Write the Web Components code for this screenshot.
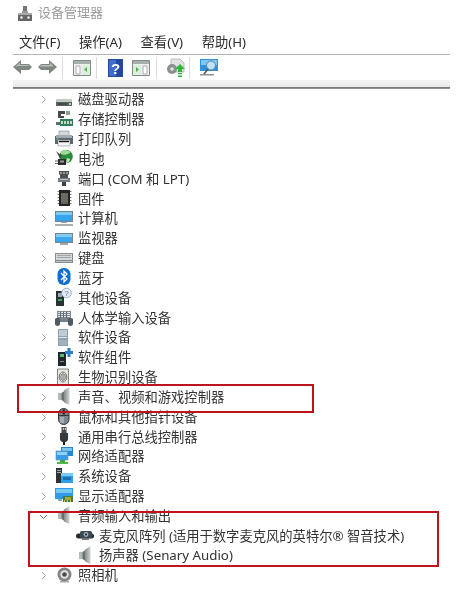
<!DOCTYPE html>
<html lang="zh">
<head>
<meta charset="utf-8">
<title>设备管理器</title>
<style>
html,body{margin:0;padding:0;background:#fff;width:475px;height:595px;overflow:hidden}
body{font-family:"Noto Sans","Noto Sans CJK SC",sans-serif;color:#333}
</style>
</head>
<body>
<dm-app>
  <dm-title slot="title" icon="manager">设备管理器</dm-title>
  <dm-menu slot="menu"><span>文件(F)</span><span>操作(A)</span><span>查看(V)</span><span>帮助(H)</span></dm-menu>
  <dm-toolbar slot="toolbar"></dm-toolbar>
  <dm-tree slot="tree">
    <dm-row icon="disk">磁盘驱动器</dm-row>
    <dm-row icon="storage">存储控制器</dm-row>
    <dm-row icon="printer">打印队列</dm-row>
    <dm-row icon="battery">电池</dm-row>
    <dm-row icon="port">端口 (COM 和 LPT)</dm-row>
    <dm-row icon="firmware">固件</dm-row>
    <dm-row icon="computer">计算机</dm-row>
    <dm-row icon="monitor">监视器</dm-row>
    <dm-row icon="keyboard">键盘</dm-row>
    <dm-row icon="bluetooth">蓝牙</dm-row>
    <dm-row icon="other">其他设备</dm-row>
    <dm-row icon="hid">人体学输入设备</dm-row>
    <dm-row icon="software">软件设备</dm-row>
    <dm-row icon="component">软件组件</dm-row>
    <dm-row icon="biometric">生物识别设备</dm-row>
    <dm-row icon="speaker">声音、视频和游戏控制器</dm-row>
    <dm-row icon="mouse">鼠标和其他指针设备</dm-row>
    <dm-row icon="usb">通用串行总线控制器</dm-row>
    <dm-row icon="network">网络适配器</dm-row>
    <dm-row icon="system">系统设备</dm-row>
    <dm-row icon="display">显示适配器</dm-row>
    <dm-row icon="speaker" open>音频输入和输出</dm-row>
    <dm-row icon="mic" child>麦克风阵列 (适用于数字麦克风的英特尔® 智音技术)</dm-row>
    <dm-row icon="speaker" child>扬声器 (Senary Audio)</dm-row>
    <dm-row icon="camera">照相机</dm-row>
  </dm-tree>
  <dm-mark slot="marks" style="left:17px;top:384px;width:297px;height:29px"></dm-mark>
  <dm-mark slot="marks" style="left:28px;top:511px;width:411px;height:56px"></dm-mark>
</dm-app>
<script>
const ICONS = {
  manager:`<path d="M6 1h4v5H6z" fill="#777"/><path d="M5 6h6v2H5z" fill="#999"/><path d="M1 8h14v8H1z" fill="#666"/><path d="M1 8h14v2H1z" fill="#aaa"/><circle cx="4.500" cy="12.500" r="1.300" fill="#eee"/><circle cx="11.500" cy="12.500" r="1.300" fill="#eee"/>`,
  disk:`<path d="M2 9h14l1 3v4H1v-4z" fill="#59625b"/><path d="M2 9h14l1 3H1z" fill="#c4cac4"/><path d="M3 13.500h9v1H3z" fill="#2f3832"/><path d="M14 13h2v2h-2z" fill="#a8dca8"/>`,
  storage:`<path d="M3 1h7v3H6v2h3v2H3z" fill="#4a4a4a"/><path d="M11 1h4v4h-4z" fill="#8fa08f"/><path d="M5 9h13v7H5z" fill="#2f7d5a"/><path d="M6 11h2v3H6zM9 11h2v3H9zM12 11h2v3h-2zM15 11h2v3h-2z" fill="#c8d8c0"/><path d="M1 12h4v3H1z" fill="#666"/>`,
  printer:`<path d="M4 1h10v5H4z" fill="#d3d9dc" stroke="#80898e" stroke-width=".6"/><path d="M0 6h18v8H0z" fill="#5b676f"/><path d="M1 5h16v3H1z" fill="#a2abb0"/><path d="M3 10h12v6H3z" fill="#f4f4f4" stroke="#70797e" stroke-width=".5"/><path d="M4 10.800h10v1.400H4z" fill="#111"/><path d="M1.500 8.500h2v1h-2z" fill="#7fd07f"/>`,
  battery:`<circle cx="11" cy="7.500" r="6.800" fill="#2c8c3c"/><path d="M6 3c3-3 7-2.500 9.500 0-2 2.500-6 3.500-9.500 2z" fill="#9ddc96"/><path d="M12 9l3 1-1 3-3 1z" fill="#bfe8b8"/><path d="M1 2l6 5-2 2.500z" fill="#444"/><path d="M3 10h8v6H3z" fill="#2c2c2c"/><path d="M0 11.500h3v1H0zM0 14h3v1H0z" fill="#666"/><path d="M5 11.500h4v2H5z" fill="#9a9a9a"/>`,
  port:`<path d="M4 2h10v3l-1 1v3H5V6L4 5z" fill="#4e5356"/><path d="M5.500 3h1v2h-1zM8.500 3h1v2h-1zM11.500 3h1v2h-1z" fill="#dcdcdc"/><path d="M3 9h12v4H3z" fill="#757b80"/><path d="M7 13h4v4H7z" fill="#3a3f42"/><path d="M5 10h8v1H5z" fill="#c0c4c8"/>`,
  firmware:`<path d="M4 1h11v16H4z" fill="#242424"/><path d="M6 4h7v11H6z" fill="#63635a"/><path d="M6 6h7M6 9h7M6 12h7" stroke="#8a8a80" stroke-width=".6"/><path d="M2.500 2h1.500v1H2.500zM2.500 5h1.500v1H2.500zM2.500 8h1.500v1H2.500zM2.500 11h1.500v1H2.500zM2.500 14h1.500v1H2.500zM15 2h1.500v1H15zM15 5h1.500v1H15zM15 8h1.500v1H15zM15 11h1.500v1H15zM15 14h1.500v1H15z" fill="#777"/>`,
  computer:`<path d="M0 2h18v11H0z" fill="#74848f"/><path d="M1 3h16v9H1z" fill="#35a4ee"/><path d="M1 3h16v3H1z" fill="#7ccbf7"/><path d="M6 13h6v1H6z" fill="#9aa3a9"/><path d="M0 15h18v2H0z" fill="#a9b0b5"/>`,
  monitor:`<path d="M0 4h18v10H0z" fill="#74848f"/><path d="M1 5h16v8H1z" fill="#3ea8ee"/><path d="M1 5h16v3H1z" fill="#82ccf6"/><path d="M5 14h8v2H5z" fill="#a3abb0"/>`,
  keyboard:`<path d="M0 4h18v10H0z" fill="#858c91"/><path d="M1 5h16v6H1z" fill="#d5d9dc"/><path d="M2 6h14v1H2zM2 8h14v1H2z" fill="#9da4a9"/><path d="M1 12h16v1H1z" fill="#bfc4c7"/>`,
  bluetooth:`<rect x="2.500" y="0" width="13" height="17" rx="6" fill="#0e6fd0"/><path d="M6 5l6 6-3 3V3l3 3-6 6" fill="none" stroke="#fff" stroke-width="1.300"/>`,
  other:`<path d="M1 3h8v15H1z" fill="#28322f"/><path d="M3 5h4v4H3z" fill="#9ab"/><path d="M3 11h4v2H3z" fill="#3aa86a"/><circle cx="11.500" cy="5" r="4.800" fill="#e4ecf5" stroke="#8fa2b8" stroke-width=".8"/><text x="11.500" y="8" font-size="8" font-family="Liberation Sans" text-anchor="middle" fill="#47709e">?</text>`,
  hid:`<path d="M2 3h14v8H2z" fill="#7f8890"/><path d="M3 4h12v1H3zM3 6h12v1H3zM3 8h12v1H3z" fill="#e2e7ea"/><path d="M5 4h1v6H5zM8 4h1v6H8zM11 4h1v6h-1z" fill="#5f686f"/><path d="M0 11c0-1 3-1 5-1v6c0 2.500-5 2.500-5 0zM13 10c2 0 5 0 5 1v5c0 2.500-5 2.500-5 0z" fill="#4f5c66"/><path d="M5 11h8v3H5z" fill="#74808a"/>`,
  software:`<path d="M3 1h10v17H3z" fill="#8ea2ae"/><path d="M4 2h8v6H4z" fill="#bccdd6"/><path d="M4 9h8v1H4z" fill="#e2eaee"/><path d="M4 12h8v5H4z" fill="#9fb1bc"/>`,
  component:`<path d="M3 4h8v14H3z" fill="#20272a"/><path d="M5 6h4v3H5z" fill="#58c070"/><path d="M5 13h4v1H5z" fill="#8a8a8a"/><path d="M12.500 0h3v3H18v3h-2.500v3h-3V6H10V3h2.500z" fill="#2b7bcf"/>`,
  biometric:`<path d="M2.500 1h11v16h-11z" fill="#e8e8e4" stroke="#868681"/><ellipse cx="8" cy="9" rx="3.800" ry="5" fill="none" stroke="#6e6e6e"/><ellipse cx="8" cy="9" rx="2.200" ry="3.300" fill="none" stroke="#6e6e6e"/><path d="M8 6.500v5" stroke="#6e6e6e"/>`,
  speaker:`<defs><linearGradient id="sp" x1="0" x2="1" y1="0" y2="0"><stop offset="0" stop-color="#858c8a"/><stop offset="1" stop-color="#d3d7d5"/></linearGradient></defs><path d="M3 6h4v7H3z" fill="#b4b9b7"/><path d="M6.500 6l3-2v11l-3-2z" fill="#6a7270"/><path d="M9 3.500L14.500 0v18L9 15.500z" fill="url(#sp)"/>`,
  mic:`<rect x="0" y="7.500" width="18" height="5" rx="2.500" fill="#1f2d36"/><rect x="4" y="5" width="12" height="7" rx="1.500" fill="#3a4a54"/><circle cx="10" cy="8.500" r="2.400" fill="#a3afb8"/><circle cx="10" cy="8.500" r="1.100" fill="#222"/><path d="M6 12.500h7v1.300H6z" fill="#555"/>`,
  mouse:`<rect x="3.500" y="1.500" width="10.500" height="16" rx="5.200" fill="#7d858c" stroke="#30353a"/><path d="M4 8.500h10" stroke="#30353a"/><path d="M7.800 2.500h2v5h-2z" fill="#1c1c1c"/><path d="M5 10h4v6H5z" fill="#a5adb3"/>`,
  usb:`<path d="M6.500 0h5v6h-5z" fill="#4b4b4b"/><path d="M7.800 1h1v2h-1zM9.800 1h1v2h-1z" fill="#ddd"/><path d="M5 6h8v7l-2 2H7l-2-2z" fill="#33393c"/><path d="M8 15h2v3H8z" fill="#1a1a1a"/>`,
  network:`<path d="M6 0h12v9H6z" fill="#2286d6"/><path d="M7 1h10v3H7z" fill="#7ac5f3"/><path d="M1 4h12v9H1z" fill="#3a9de6" stroke="#6b8ea8" stroke-width=".6"/><path d="M2 5h10v3H2z" fill="#8fd0f6"/><path d="M5 13h5v2H5z" fill="#3da63d"/><path d="M2 15h11v2H2z" fill="#52b64f"/>`,
  system:`<path d="M1 1h6v15H1z" fill="#28343a"/><path d="M2 3h4v1H2zM2 5h4v1H2z" fill="#9ab"/><path d="M6 6h12v10H6z" fill="#2f9fe8"/><path d="M6 6h12v3H6z" fill="#7cc8f4"/><path d="M8 10h8v3H8z" fill="#1f70b0"/>`,
  display:`<path d="M0 2h18v11H0z" fill="#2f9ae6"/><path d="M1 3h16v4H1z" fill="#79c7f5"/><path d="M3 13h4v2H3z" fill="#8aa"/><path d="M8 10h10v6H8z" fill="#3f7d3a"/><path d="M10 11h6v3h-6z" fill="#a8a83a"/><path d="M9 14h1v2H9zM12 14h1v2h-1zM15 14h1v2h-1z" fill="#d8c860"/>`,
  camera:`<circle cx="9.500" cy="8.500" r="7" fill="#80868a"/><circle cx="9.500" cy="8.500" r="4.200" fill="#e4e4e4"/><circle cx="9.500" cy="8.500" r="2.300" fill="#4a4a4a"/><path d="M5 15h9v1.500H5z" fill="#aaa"/>`,
  back:`<path d="M0 8l8-7v4h8l3 3-3 3H8v4z" fill="#7f8781"/><path d="M2 8l5-4.500V6h8l1.500 1H5z" fill="#b8bfb9"/>`,
  fwd:`<path d="M19 8l-8-7v4H3L0 8l3 3h8v4z" fill="#7f8781"/><path d="M3 6h9V4l4 3.500H2z" fill="#b8bfb9"/>`,
  panelL:`<path d="M.5 1.500h17v15H.5z" fill="#eef1ef" stroke="#818a85"/><path d="M1 2h16v3H1z" fill="#a8b0ab"/><path d="M3 7h4v8H3z" fill="#fff" stroke="#aab"/><path d="M9 6h8v10H9z" fill="#dcefd9"/><path d="M14 8v5l-3-2.500z" fill="#4fae4f"/>`,
  help:`<path d="M0 0h15v18H0z" fill="#24489e"/><path d="M1 1h7v16H1z" fill="#3f6dcc"/><text x="7.500" y="14.500" font-size="15" font-weight="700" font-family="Liberation Sans" text-anchor="middle" fill="#fff">?</text>`,
  panelR:`<path d="M.5 1.500h17v15H.5z" fill="#eef1ef" stroke="#818a85"/><path d="M1 2h16v3H1z" fill="#a8b0ab"/><path d="M11 7h4v8h-4z" fill="#fff" stroke="#aab"/><path d="M1 6h8v10H1z" fill="#dcefd9"/><path d="M4 8v5l3-2.500z" fill="#4fae4f"/>`,
  update:`<path d="M5 0h9l4 4v9H5z" fill="#dfe3e1" stroke="#a0a6a3" stroke-width=".7"/><circle cx="6" cy="10" r="5" fill="#8a918d"/><circle cx="6" cy="10" r="1.800" fill="#dfe3e1"/><path d="M14 5l5 5h-3v3h-4v-3H9z" fill="#2fb53a"/><path d="M12 14h4v1.300h-4zM12 16.500h4V18h-4z" fill="#2fb53a"/>`,
  scan:`<path d="M0 0h18v12H0z" fill="#2f94dc"/><path d="M1 1h16v5H1z" fill="#7fc8f3"/><circle cx="11" cy="6.500" r="4.500" fill="#bfe2f7" stroke="#5a7f98"/><path d="M8 10l-4 5" stroke="#555" stroke-width="1.600"/><path d="M0 15h14v1.500H0z" fill="#8a9397"/>`
};

const icon = (name, w, h) => `<svg part="icon" width="${w}" height="${h}" viewBox="0 0 ${w} ${h}" aria-hidden="true" style="filter:blur(.35px);overflow:visible">${ICONS[name] || ''}</svg>`;

class DmApp extends HTMLElement {
  constructor(){ super();
    this.attachShadow({mode:'open'}).innerHTML = `<style>
      :host{display:block;position:relative;width:475px;height:595px;overflow:hidden;background:#fff}
      .wrap{display:flex;flex-direction:column}
    </style><div class="wrap"><slot name="title"></slot><slot name="menu"></slot><slot name="toolbar"></slot><slot name="tree"></slot></div><slot name="marks"></slot>`;
  }
}
class DmTitle extends HTMLElement {
  connectedCallback(){
    this.shadowRoot.querySelector('.i').innerHTML = icon(this.getAttribute('icon'),16,17);
  }
  constructor(){ super();
    this.attachShadow({mode:'open'}).innerHTML = `<style>
      :host{display:flex;align-items:center;height:28px;padding-left:17px;box-sizing:border-box;color:#9a9a9a;font-size:13px;filter:blur(.3px)}
      .i{display:flex;width:21px;margin-top:-1px}
      .t{margin-top:-5px}
    </style><span class="i"></span><span class="t"><slot></slot></span>`;
  }
}
class DmMenu extends HTMLElement {
  constructor(){ super();
    this.attachShadow({mode:'open'}).innerHTML = `<style>
      :host{display:block;margin-right:25px;margin-left:13px;height:27px;box-sizing:border-box;border-bottom:1px solid #b4b4b4;font-size:13.3px;color:#2b2b2b}
      .m{display:flex;gap:18.5px;padding:5px 0 0 6px;line-height:18px;filter:blur(.25px)}
    </style><div class="m"><slot></slot></div>`;
  }
}
class DmToolbar extends HTMLElement {
  constructor(){ super();
    const items = [['back',19,6],['fwd',19,5],['sep',0,10],['panelL',18,5],['sep',0,11],['help',15,9],['panelR',18,6],['sep',0,9],['update',19,4],['sep',0,10],['scan',18,0]];
    let html = '';
    for (const [n,w,gap] of items) {
      html += n==='sep' ? `<i style="margin-right:${gap}px"></i>` : `<span style="margin-right:${gap}px">${icon(n,w,18)}</span>`;
    }
    this.attachShadow({mode:'open'}).innerHTML = `<style>
      :host{display:block;margin:0 25px 0 13px}
      .bar{display:flex;align-items:center;height:25px}
      span{display:flex}
      i{display:block;width:1px;height:22px;background:#dcdcdc}
      .band{height:7px;background:linear-gradient(#f4f4f4,#e8e8e8)}
      .line{height:2px;background:linear-gradient(#6f6f6f,#9a9a9a)}
    </style><div class="bar">${html}</div><div class="band"></div><div class="line"></div>`;
  }
}
class DmTree extends HTMLElement {
  constructor(){ super();
    this.attachShadow({mode:'open'}).innerHTML = `<style>
      :host{display:grid;grid-auto-rows:19.84px}
    </style><slot></slot>`;
  }
}
class DmRow extends HTMLElement {
  constructor(){ super();
    this.attachShadow({mode:'open'}).innerHTML = `<style>
      :host{display:flex;align-items:center;font-size:13.3px;line-height:19px;color:#333;white-space:nowrap;padding-left:39px;height:19.84px}
      :host([child]){padding-left:76px}
      .c{display:flex;width:16px;height:16px;align-items:center;margin-top:2px}
      :host([child]) .c{display:none}
      .i{display:flex;width:23px;height:18px}
      .t{filter:blur(.25px);display:block;margin-top:2px}
    </style><span class="c"></span><span class="i"></span><span class="t"><slot></slot></span>`;
  }
  connectedCallback(){
    const open = this.hasAttribute('open');
    this.shadowRoot.querySelector('.c').innerHTML = open
      ? `<svg width="9" height="9" viewBox="0 0 9 9"><path d="M1 3l3.500 3.500L8 3" fill="none" stroke="#777" stroke-width="1"/></svg>`
      : `<svg width="9" height="9" viewBox="0 0 9 9"><path d="M3 1l3.500 3.500L3 8" fill="none" stroke="#a6a6a6" stroke-width="1"/></svg>`;
    this.shadowRoot.querySelector('.i').innerHTML = icon(this.getAttribute('icon'),18,18);
  }
}
class DmMark extends HTMLElement {
  constructor(){ super();
    this.attachShadow({mode:'open'}).innerHTML = `<style>
      :host{display:block;position:absolute;box-sizing:border-box;border:2px solid #c0141c;pointer-events:none}
    </style>`;
  }
}
customElements.define('dm-app', DmApp);
customElements.define('dm-title', DmTitle);
customElements.define('dm-menu', DmMenu);
customElements.define('dm-toolbar', DmToolbar);
customElements.define('dm-tree', DmTree);
customElements.define('dm-row', DmRow);
customElements.define('dm-mark', DmMark);
</script>
</body>
</html>
